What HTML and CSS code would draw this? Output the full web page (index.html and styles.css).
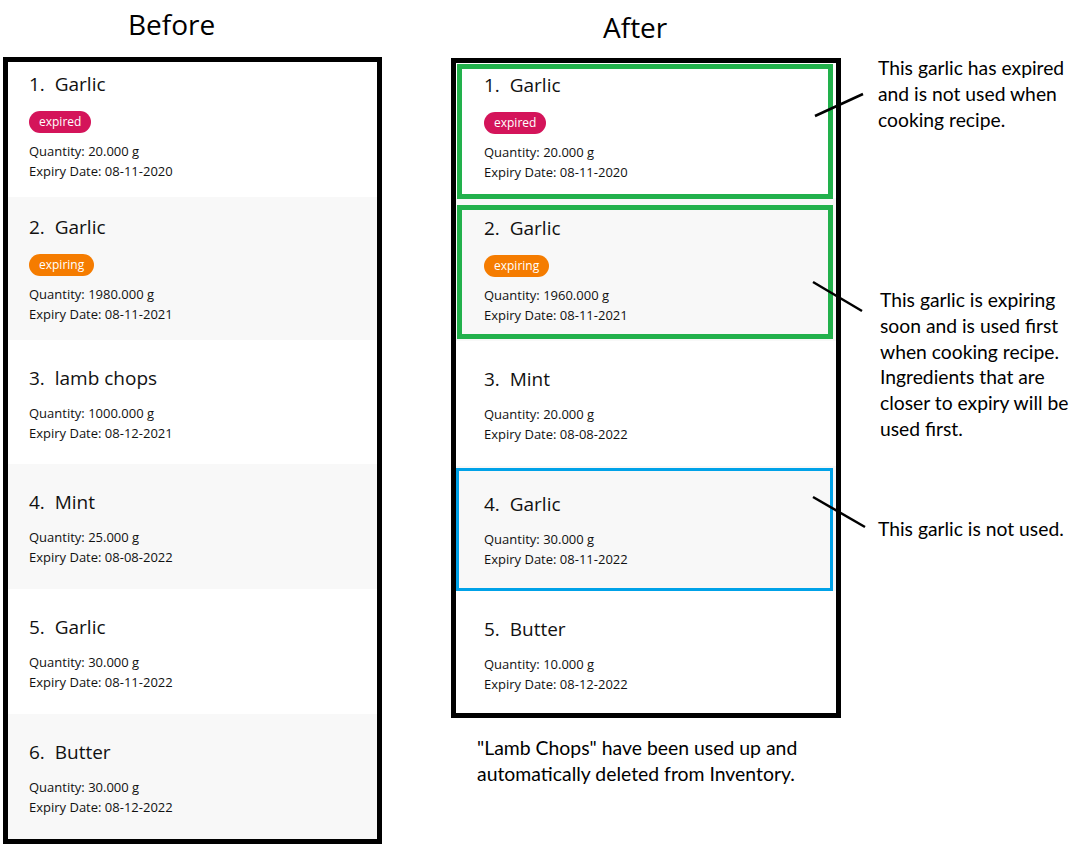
FILE: index.html
```html
<!DOCTYPE html>
<html>
<head>
<meta charset="utf-8">
<link rel="stylesheet" href="styles.css">
</head>
<body>
<div class="canvas">
  <div class="page">
    <section class="col col-before">
      <h1 class="heading heading-before">Before</h1>
      <div class="panel panel-before">
        <div class="item badge-row first"><div class="title">1.&nbsp; Garlic</div><span class="badge expired">expired</span><div class="meta">Quantity: 20.000 g</div><div class="meta">Expiry Date: 08-11-2020</div></div>
        <div class="item badge-row alt"><div class="title">2.&nbsp; Garlic</div><span class="badge expiring">expiring</span><div class="meta">Quantity: 1980.000 g</div><div class="meta">Expiry Date: 08-11-2021</div></div>
        <div class="item plain"><div class="title">3.&nbsp; lamb chops</div><div class="meta">Quantity: 1000.000 g</div><div class="meta">Expiry Date: 08-12-2021</div></div>
        <div class="item plain alt"><div class="title">4.&nbsp; Mint</div><div class="meta">Quantity: 25.000 g</div><div class="meta">Expiry Date: 08-08-2022</div></div>
        <div class="item plain"><div class="title">5.&nbsp; Garlic</div><div class="meta">Quantity: 30.000 g</div><div class="meta">Expiry Date: 08-11-2022</div></div>
        <div class="item plain alt"><div class="title">6.&nbsp; Butter</div><div class="meta">Quantity: 30.000 g</div><div class="meta">Expiry Date: 08-12-2022</div></div>
      </div>
    </section>
    <section class="col col-after">
      <h1 class="heading heading-after">After</h1>
      <div class="panel panel-after">
        <div class="item badge-row first"><div class="title">1.&nbsp; Garlic</div><span class="badge expired">expired</span><div class="meta">Quantity: 20.000 g</div><div class="meta">Expiry Date: 08-11-2020</div></div>
        <div class="item badge-row alt"><div class="title">2.&nbsp; Garlic</div><span class="badge expiring">expiring</span><div class="meta">Quantity: 1960.000 g</div><div class="meta">Expiry Date: 08-11-2021</div></div>
        <div class="item plain"><div class="title">3.&nbsp; Mint</div><div class="meta">Quantity: 20.000 g</div><div class="meta">Expiry Date: 08-08-2022</div></div>
        <div class="item plain alt"><div class="title">4.&nbsp; Garlic</div><div class="meta">Quantity: 30.000 g</div><div class="meta">Expiry Date: 08-11-2022</div></div>
        <div class="item plain last"><div class="title">5.&nbsp; Butter</div><div class="meta">Quantity: 10.000 g</div><div class="meta">Expiry Date: 08-12-2022</div></div>
        <div class="mark mark-green mark-1"></div>
        <div class="mark mark-green mark-2"></div>
        <div class="mark mark-blue mark-3"></div>
      </div>
      <p class="footnote">"Lamb Chops" have been used up and<br>automatically deleted from Inventory.</p>
    </section>
  </div>

  <svg class="pointers" width="1081" height="846" viewBox="0 0 1081 846">
    <line x1="815" y1="116" x2="863" y2="94"/>
    <line x1="813" y1="282" x2="862" y2="311"/>
    <line x1="813" y1="497" x2="865" y2="527"/>
  </svg>

  <p class="note note-1">This garlic has expired<br>and is not used when<br>cooking recipe.</p>
  <p class="note note-2">This garlic is expiring<br>soon and is used first<br>when cooking recipe.<br>Ingredients that are<br>closer to expiry will be<br>used first.</p>
  <p class="note note-3">This garlic is not used.</p>
</div>
</body>
</html>
```

FILE: styles.css
```css
* { box-sizing: border-box; }

html, body {
  margin: 0;
  padding: 0;
  background: #ffffff;
}

.canvas {
  position: relative;
  width: 1081px;
  height: 846px;
  overflow: hidden;
  font-family: "Open Sans", "Noto Sans", sans-serif;
  color: #111111;
}

.page {
  display: flex;
  align-items: flex-start;
  padding-left: 3px;
  gap: 69px;
}

.col { display: flex; flex-direction: column; }
.col-before { width: 379px; }
.col-after { width: 390px; }

.heading {
  margin: 0;
  font-weight: 400;
  font-size: 28px;
  line-height: 36px;
  color: #000;
}
.heading-before { height: 57px; padding: 6px 0 0 125px; }
.heading-after { height: 58px; padding: 9px 0 0 152px; }

.panel {
  border: 5px solid #000;
  background: #fff;
  display: flex;
  flex-direction: column;
}
.panel-before { height: 787px; }
.panel-after { height: 660px; position: relative; }

.item {
  display: flex;
  flex-direction: column;
  align-items: flex-start;
  background: #ffffff;
}
.panel-before .item { padding-left: 21px; }
.panel-after .item { padding-left: 28px; }

.item.alt { background: #f8f8f8; }

.badge-row { height: 143px; padding-top: 17px; }
.badge-row.first { height: 135px; padding-top: 9px; }
.plain { height: 125px; padding-top: 25px; }
.plain.last { height: 122px; }

.title {
  font-size: 19px;
  line-height: 26px;
  color: #111;
}

.badge {
  display: inline-block;
  height: 22px;
  line-height: 22px;
  padding: 0 10px;
  border-radius: 11px;
  font-size: 12px;
  color: #fff;
  margin-top: 14px;
}
.badge.expired { background: #d4145a; }
.badge.expiring { background: #f57c00; }

.meta {
  font-size: 13px;
  line-height: 20px;
  color: #111;
}
.title + .meta { margin-top: 12px; }
.badge + .meta { margin-top: 8px; }

.mark {
  position: absolute;
  pointer-events: none;
}
.mark-green { border: 5px solid #22b14c; }
.mark-blue { border: 3px solid #00a2e8; }
.mark-1 { left: 1px; top: 1px; width: 376px; height: 135px; }
.mark-2 { left: 1px; top: 142px; width: 376px; height: 134px; }
.mark-3 { left: 0px; top: 405px; width: 377px; height: 123px; }

.footnote {
  margin: 17px 0 0 26px;
  font-family: Lato, "Open Sans", sans-serif;
  font-size: 19.4px;
  line-height: 26px;
  color: #000;
}

.pointers {
  position: absolute;
  left: 0;
  top: 0;
  pointer-events: none;
}
.pointers line {
  stroke: #000;
  stroke-width: 2.5;
}

.note {
  position: absolute;
  margin: 0;
  font-family: Lato, "Open Sans", sans-serif;
  font-size: 19.3px;
  line-height: 25.8px;
  color: #000;
}
.note-1 { left: 878px; top: 55px; }
.note-2 { left: 880px; top: 287px; }
.note-3 { left: 878px; top: 516px; }
```
